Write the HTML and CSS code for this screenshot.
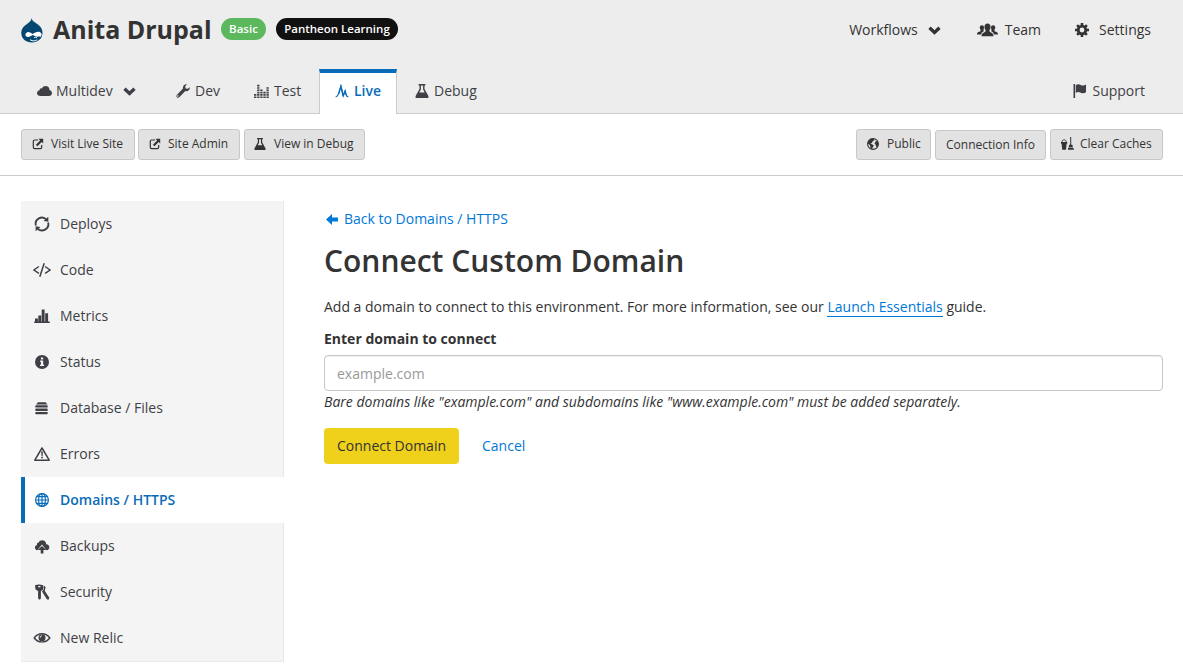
FILE: index.html
```html
<!DOCTYPE html>
<html lang="en">
<head>
<meta charset="utf-8">
<title>Connect Custom Domain</title>
<link rel="stylesheet" href="styles.css">
</head>
<body>
<svg class="sprite" aria-hidden="true">
  <symbol id="chevron" viewBox="0 0 13 9"><path d="M1.500 1.700 6.500 6.500 11.500 1.700" fill="none" stroke="currentColor" stroke-width="3.300"/></symbol>
  <symbol id="flask" viewBox="0 0 14 14"><path d="M3.600 0h6.800v1.500h-.9V5l3.900 7.100V14H.6v-1.900L4.500 5V1.500h-.9zM5.900 1.500v4L4.300 8.600h5.400L8.100 5.500v-4z" fill-rule="evenodd"/></symbol>
  <symbol id="external" viewBox="0 0 12 12"><path d="M6 2H2.600Q1.300 2 1.300 3.300v6q0 1.300 1.300 1.300h5.800q1.300 0 1.300-1.300V7" fill="none" stroke="currentColor" stroke-width="1.200"/><path d="M6.500.8h4.700v4.700L9.700 4 5.400 8.200 3.900 6.700 8.100 2.400z"/></symbol>
</svg>

<header class="site-header">
  <div class="title-row">
    <svg class="logo" viewBox="0 0 22 25"><path d="M10.700 0c.4 3 2.300 3.800 4.800 5.500 3.800 2.500 6 5 6 9.300 0 5.900-4.500 9.600-10.500 9.600S.3 20.600.3 14.900C.3 10.500 3 8 6.300 5.700 8.600 4.100 10.200 3 10.700 0z" fill="#064771"/><path d="M11.400 16C9.500 14.600 7.800 13.800 6.400 14.200c-2 .5-2.600 2.600-1.600 3.900 1.200 1.500 3.400 1 5.100-.1l1.700-1c1.800.3 2.800 1.700 4.700 1.700 1.500 0 2.400-.2 3.300 0 1.200-.7 1.600-3.600-.5-4.500-2.600-1.100-5.100.5-7.700 1.800z" fill="#fff"/><path d="M9 21.800c2.800 1.600 5.900 1.400 7.200-.2M13 19.800c1.100-.9 2.200-.5 3.100.1" fill="none" stroke="#fff" stroke-width="1"/></svg>
    <h1 class="site-name">Anita Drupal</h1>
    <span class="badge badge-plan">Basic</span>
    <span class="badge badge-org">Pantheon Learning</span>
    <nav class="account-nav">
      <a class="workflows">Workflows<svg class="chev"><use href="#chevron"/></svg></a>
      <a class="team"><svg class="i-team" viewBox="0 0 21 14"><circle cx="4.900" cy="4.500" r="2.200"/><circle cx="16.100" cy="4.500" r="2.200"/><path d="M3.500 5h2.800l.4 3.300-2 1.500-.5 1.600H0C0 8.800 2.200 9 3.500 8.300zM17.500 5h-2.800l-.4 3.300 2 1.500.5 1.600H21c0-2.600-2.200-2.400-3.500-3.100z"/><path d="M10.500.6c2 0 3 1.300 3 3.300 0 1.700-.6 2.600-1.200 3.500 0 2.300 4.200 1.600 4.200 5.900h-12c0-4.300 4.200-3.600 4.200-5.900-.6-.9-1.200-1.800-1.200-3.500 0-2 1-3.300 3-3.300z"/></svg>Team</a>
      <a class="settings"><svg class="i-gear" viewBox="0 0 14 14"><circle cx="7" cy="7" r="3.800" fill="none" stroke="currentColor" stroke-width="2.800"/><g stroke="currentColor" stroke-width="2.600"><path d="M7 0v2.500M7 11.500V14M0 7h2.500M11.500 7H14M2.100 2.100l1.700 1.700M10.200 10.200l1.700 1.700M2.100 11.900l1.700-1.700M10.200 3.800l1.700-1.700"/></g></svg>Settings</a>
    </nav>
  </div>
  <nav class="tabs">
    <a class="tab tab-multidev"><svg class="i-cloud" viewBox="0 0 15 10"><path d="M3.500 10C1.400 10 0 8.900 0 7.100c0-1.600 1.100-2.600 2.600-2.800C2.500 2.900 3.800 2 5 2.400 5.800.7 7.100 0 8.600 0c2.300 0 3.900 1.700 3.900 3.900C14 4.300 15 5.500 15 7c0 1.800-1.300 3-3.200 3z"/></svg>Multidev<svg class="chev"><use href="#chevron"/></svg></a>
    <a class="tab tab-dev"><svg class="i14" viewBox="0 0 14 14"><path d="M13.700 3.200c.5 2.500-1.800 4.600-4.300 3.900L3.200 13.300c-1.500 1.500-3.800-.8-2.400-2.400L7 4.600C6.500 2 8.600-.2 11 .3L9.200 2.200l.4 2.200 2.200.4zM2 11.300a.7.700 0 1 0 .1 1.200.7.700 0 0 0-.1-1.200z"/></svg>Dev</a>
    <a class="tab tab-test"><svg class="i-eq" viewBox="0 0 15 14"><g fill="none" stroke="currentColor" stroke-width="2.300" stroke-dasharray="1.600 .7"><path d="M1.200 14V9.400M4.300 14V0M7.400 14V4.800M10.500 14V7.100M13.600 14V2.500"/></g></svg>Test</a>
    <a class="tab tab-live active"><svg class="i14" viewBox="0 0 14 14"><path d="M.7 12.800c1.500-.2 2-1 2.400-2.200L5.900 2l2.300 10 1.900-5.200 1.100 4.200c.3 1.200.9 1.600 2.100 1.800" fill="none" stroke="currentColor" stroke-width="1.200"/><path d="M5.900 0 3.500 9.800l.8.400L5.900 5l1.600 7.300h1.200L10 9l.8 2.200 1-.3L10.200 5.400 8.500 9.800z"/></svg>Live</a>
    <a class="tab tab-debug"><svg class="i14"><use href="#flask"/></svg>Debug</a>
    <a class="tab tab-support"><svg class="i14" viewBox="0 0 14 14"><path d="M.5 0h1.600v14H.5zM2.800 1.200c1.800-1.400 3.400-.9 4.900-.2 1.800.8 3.300 1 5.300-.5v7.700c-2 1.500-3.500 1.300-5.300.5-1.500-.7-3.100-1.200-4.900.2z"/></svg>Support</a>
  </nav>
</header>

<div class="toolbar">
  <div class="group">
    <button class="btn btn-visit"><svg class="i-ext"><use href="#external"/></svg>Visit Live Site</button>
    <button class="btn btn-admin"><svg class="i-ext"><use href="#external"/></svg>Site Admin</button>
    <button class="btn btn-debug"><svg class="i12"><use href="#flask"/></svg>View in Debug</button>
  </div>
  <div class="group">
    <button class="btn btn-public"><svg class="i12" viewBox="0 0 12 12"><circle cx="6" cy="6" r="5.400" fill="none" stroke="currentColor" stroke-width="1.100"/><path d="M1 3.500 3.600.8 6.800.7 7.500 2 5.700 3.300 4.900 5 3.300 5.400l2 1.100 1.500 1.100-1.200 1.800-.6 2L3.400 9.600 3 7.200.8 5.500zM8.500 3.400l2-.5.9 2.700-.7 3.200-1.400.2-.5-2-1.200-1.500z"/></svg>Public</button>
    <button class="btn btn-info">Connection Info</button>
    <button class="btn btn-cache"><svg class="i-clean" viewBox="0 0 13 13"><path d="M0 4.900h6.200v1.800h-.6L5 12.800H1.200L.6 6.700H0zM9.200 0h1v8h-1zM8.100 7.800h3.300l.5 2.600H7.600zM7 10.900h5.700v1.800H7z"/><path d="M.9 5.300C1 1.900 5.200 1.900 5.300 5.300" fill="none" stroke="currentColor" stroke-width=".9"/></svg>Clear Caches</button>
  </div>
</div>

<div class="page">
  <nav class="sidebar">
    <a class="side-item"><svg class="side-icon" viewBox="0 0 18 18"><path d="M2.900 10.500A6.200 6.200 0 0 1 13.500 4.700M15.100 7.500A6.200 6.200 0 0 1 4.500 13.300" fill="none" stroke="currentColor" stroke-width="1.800"/><path d="m15.300 1.800.1 5-4.800-.8zM2.700 16.200l-.1-5 4.800.8z"/></svg>Deploys</a>
    <a class="side-item"><svg class="side-icon" viewBox="0 0 18 18"><path d="M5.900 5.500.9 9l5 3.400M12.100 5.500l5 3.500-5 3.400M11.200 2.300 6.800 15.700" fill="none" stroke="currentColor" stroke-width="1.500"/></svg>Code</a>
    <a class="side-item"><svg class="side-icon" viewBox="0 0 18 18"><path d="M1.200 14.600h15.600v1.300H1.200zM2 11.500h2.900v4H2zM5.300 8.500h2.900V15H5.300zM8.700 2.500h2.900V15H8.700zM12.200 6.200h2.900V15h-2.900z"/></svg>Metrics</a>
    <a class="side-item"><svg class="side-icon" viewBox="0 0 18 18"><path fill-rule="evenodd" d="M9 2a7 7 0 1 1 0 14A7 7 0 0 1 9 2zM7.900 4.500v2h2.300v-2zM7 7.500v1.200h.9v3.100H7V13h4.100v-1.200h-.9V7.500z"/></svg>Status</a>
    <a class="side-item"><svg class="side-icon" viewBox="0 0 18 18"><path d="M5 3.300h7.500l2 2.100H3zM3.200 6.200h10.600q1 0 1 1.200t-1 1.200H3.200q-1 0-1-1.200t1-1.200zM3.200 9.500h10.600q1 0 1 1.200t-1 1.200H3.200q-1 0-1-1.200t1-1.200zM3.200 12.900h10.600q1 0 1 1.200t-1 1.200H3.200q-1 0-1-1.200t1-1.200z"/></svg>Database / Files</a>
    <a class="side-item"><svg class="side-icon" viewBox="0 0 18 18"><path d="M9 3 16.200 15.200H1.800z" fill="none" stroke="currentColor" stroke-width="1.500" stroke-linejoin="round"/><path d="M8.200 6.600h1.700l-.3 4.300H8.500zM8.200 11.700h1.700v1.600H8.200z"/></svg>Errors</a>
    <a class="side-item current"><svg class="side-icon" viewBox="0 0 18 18"><g fill="none" stroke="currentColor" stroke-width="1.200"><circle cx="9" cy="9" r="6.400"/><ellipse cx="9" cy="9" rx="3.400" ry="6.400"/><path d="M9 2.500v13M2.500 9h13M3.500 5.600h11M3.500 12.400h11"/></g></svg>Domains / HTTPS</a>
    <a class="side-item"><svg class="side-icon" viewBox="0 0 18 18"><path d="M4.300 13.200C1.200 12.900 1.300 8.600 3.900 8 3.800 6.300 4.700 5.600 5.700 5.600 7 1.800 13.100 2.600 13.200 7.200c4 .1 4.300 5.600.3 6L9 7.600z"/><path d="m9 8.900 4.300 4.200h-2.900v3.500H7.700v-3.500H4.700z"/></svg>Backups</a>
    <a class="side-item"><svg class="side-icon" viewBox="0 0 18 18"><path fill-rule="evenodd" d="M2 2.300Q6 .8 10 2.300l.4 4.200-2.500 1.600v7.500l-1.200 1.200-1.600-1.200V8.100L2.500 6.500zM5.200 3v1.300h2.200V3z"/><path d="M10.500 2.500 12.600 4l-.8 4 4.400 6.400-.3 2H14L9 8.600l1.900-2z"/></svg>Security</a>
    <a class="side-item"><svg class="side-icon" viewBox="0 0 18 18"><path d="M1.200 9c3.700-5.700 11.900-5.700 15.600 0-3.700 5.200-11.900 5.200-15.600 0z" fill="none" stroke="currentColor" stroke-width="1.400"/><circle cx="9" cy="8.700" r="3.500"/><path d="M7.300 8.600c0-1.300.7-1.800 1.700-1.900" fill="none" stroke="#f4f4f4" stroke-width="1"/></svg>New Relic</a>
  </nav>
  <main class="content">
    <a class="back"><svg class="i-back" viewBox="0 0 12 11"><path d="M0 5.500 6 0v3.400h6v4.200H6V11z"/></svg>Back to Domains / HTTPS</a>
    <h2 class="heading">Connect Custom Domain</h2>
    <p class="intro">Add a domain to connect to this environment. For more information, see our <a class="guide">Launch Essentials</a> guide.</p>
    <label class="field-label" for="domain">Enter domain to connect</label>
    <input class="field" id="domain" type="text" placeholder="example.com">
    <p class="hint">Bare domains like "example.com" and subdomains like "www.example.com" must be added separately.</p>
    <div class="actions"><button class="primary">Connect Domain</button><a class="cancel">Cancel</a></div>
  </main>
</div>
</body>
</html>
```
FILE: styles.css
```css
* { box-sizing: border-box; }
body { margin: 0; height: 672px; overflow: hidden; background: #fff; color: #333; font: 14px/20px "Open Sans", "Noto Sans", sans-serif; }
svg { fill: currentColor; flex: none; }
h1, h2, p { margin: 0; }
a { white-space: nowrap; }
.sprite { display: none; }
.site-header { height: 114px; background: #ededed; border-bottom: 1px solid #ccc; }
.title-row { height: 69px; display: flex; align-items: flex-start; padding: 0 32px 0 21px; }
.logo { width: 22px; height: 25px; margin-top: 18px; }
.site-name { margin: 11px 9px 0 10px; font-size: 25px; line-height: 36px; font-weight: 700; white-space: nowrap; width: 159px; }
.badge { height: 22px; margin-top: 18px; border-radius: 11px; color: #fff; font-size: 11.5px; line-height: 21px; font-weight: 600; text-align: center; white-space: nowrap; }
.badge-plan { width: 45px; background: #5cb85c; }
.badge-org { width: 122px; margin-left: 10px; background: #111; }
.account-nav { display: flex; margin: 20px 0 0 auto; }
.account-nav a { display: flex; align-items: center; height: 20px; }
.chev { width: 13px; height: 9px; margin-left: 10px; }
.i-team { width: 21px; height: 14px; margin-right: 7px; }
.team { margin-left: 36px; }
.settings { margin-left: 34px; }
.i-gear { width: 14px; height: 14px; margin-right: 10px; }
.tabs { display: flex; height: 45px; color: #3f3f46; }
.tab { display: flex; align-items: center; height: 45px; padding-bottom: 1px; }
.tab-multidev { margin-left: 37px; width: 139px; }
.i-cloud { width: 15px; height: 10px; margin-right: 4px; }
.i14 { width: 14px; height: 14px; margin-right: 5px; }
.tab-dev { width: 78px; }
.tab-test { width: 65px; }
.i-eq { width: 15px; height: 14px; margin-right: 5px; }
.active { width: 78px; background: #fff; border: 1px solid #ccc; border-top: 4px solid #0a6cb9; border-bottom: 0; padding: 0 0 5px 15px; color: #0a6cb9; font-weight: 600; }
.tab-debug { margin-left: 18px; }
.tab-support { margin: 0 38px 0 auto; }
.toolbar { height: 62px; padding: 15px 20px 0 21px; display: flex; justify-content: space-between; border-bottom: 1px solid #ccc; }
.group { display: flex; gap: 4px; }
.btn { height: 31px; display: flex; align-items: center; padding: 0 0 2px 10px; background: #e2e2e2; border: 1px solid #c8c8c8; border-radius: 3px; color: #333; font: 12px/18px "Open Sans", "Noto Sans", sans-serif; white-space: nowrap; }
.i-ext { width: 12px; height: 12px; margin-right: 7px; }
.i12 { width: 12px; height: 12px; margin-right: 8px; }
.btn-visit { width: 114px; margin-right: -1px; }
.btn-admin { width: 102px; }
.btn-debug { width: 121px; padding-left: 9px; }
.btn-public { width: 75px; }
.btn-info { width: 111px; height: 30px; margin-top: 1px; padding-bottom: 1px; }
.btn-cache { width: 113px; }
.i-clean { width: 13px; height: 13px; margin-right: 6px; }
.page { display: flex; padding: 25px 20px 0 21px; }
.sidebar { width: 263px; height: 461px; background: #f4f4f4; border-right: 1px solid #e8e8e8; border-bottom: 1px solid #e8e8e8; color: #3f3f46; }
.side-item { display: flex; align-items: center; height: 46px; padding-left: 12px; }
.side-icon { width: 18px; height: 18px; margin-right: 9px; }
.current { width: 263px; padding-left: 8px; background: #fff; border-left: 4px solid #0a6cb9; color: #0a6cb9; font-weight: 600; }
.content { flex: 1; margin-left: 40px; padding-top: 8px; }
.back { display: flex; align-items: center; height: 20px; padding-left: 2px; color: #0078d7; }
.i-back { width: 12px; height: 11px; margin-right: 6px; }
.heading { margin-top: 12px; font-size: 30px; line-height: 40px; font-weight: 600; white-space: nowrap; }
.intro { margin-top: 16px; white-space: nowrap; }
.guide { color: #0078d7; border-bottom: 1px solid #0078d7; }
.field-label { display: block; margin-top: 12px; font-weight: 700; }
.field { display: block; width: 100%; height: 36px; margin-top: 6px; padding: 1px 12px 0; border: 1px solid #c7c7c7; border-radius: 4px; box-shadow: inset 0 1px 1px rgba(0,0,0,.075); font: 14px/20px "Open Sans", "Noto Sans", sans-serif; }
.field::placeholder { color: #999; opacity: 1; }
.hint { margin-top: 1px; font-size: 14px; font-style: italic; white-space: nowrap; }
.actions { display: flex; align-items: center; margin-top: 16px; }
.primary { width: 135px; height: 36px; padding: 0; background: #efd01b; border: 0; border-radius: 4px; color: #333; font: 14px/20px "Open Sans", "Noto Sans", sans-serif; }
.cancel { margin-left: 23px; color: #0078d7; }
```
